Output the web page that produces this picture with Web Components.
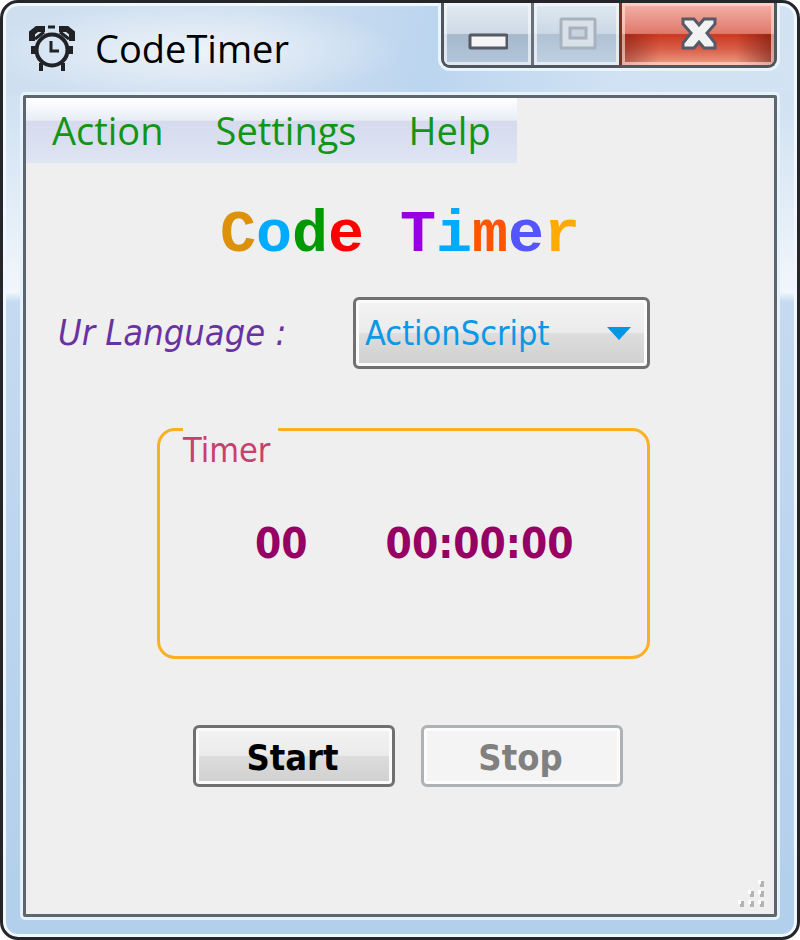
<!DOCTYPE html>
<html lang="en">
<head>
<meta charset="utf-8">
<meta name="viewport" content="width=device-width, initial-scale=1">
<title>CodeTimer</title>
<style>
	body {
		margin : 0;
		background : white;
		--ui : "Open Sans", "Noto Sans", sans-serif;
		--form : "DejaVu Sans Condensed", "DejaVu Sans", sans-serif;
	}
</style>
</head>
<body>

<app-window>
	<window-title slot="title">CodeTimer</window-title>
	<window-controls slot="controls"></window-controls>
	<menu-bar>
		<menu-entry>Action</menu-entry>
		<menu-entry>Settings</menu-entry>
		<menu-entry>Help</menu-entry>
	</menu-bar>
	<rainbow-title text="Code Timer"></rainbow-title>
	<language-picker label="Ur Language :" value="ActionScript"></language-picker>
	<timer-box label="Timer"></timer-box>
	<timer-actions></timer-actions>
	<size-grip></size-grip>
</app-window>

<script>
'use strict';

// shared by every component : build the open shadow root
function render(host, style, html) {
	host.attachShadow({mode: 'open'}).innerHTML = `<style>*{box-sizing:border-box}${style}</style>${html}`;
}

customElements.define('app-window', class extends HTMLElement {
	constructor() {
		super();
		render(this, `
			:host {
				display : flex;
				flex-direction : column;
				box-sizing : border-box;
				min-height : 100vh;
				padding : 0 20px 20px;
				border : 3px solid #25262a;
				border-radius : 18px;
				box-shadow : inset 0 0 0 3px #f0f8fd;
				background :
					radial-gradient(ellipse 210px 50px at 190px 48px, #edf3f9 0%, #edf3f900 100%),
					linear-gradient(100deg, #cfdff0 0, #cfdff0 32%, #bcd5ef 54%, #cfe1f3 76%, #d3e3f4 100%) top / 100% 92px no-repeat,
					linear-gradient(#d0e1f2 0, #d0e1f2 10%, #f1f6fb 31%, #c5daf0 32%, #bcd5ee 60%, #b2cfeb 100%);
			}
			header {
				display : flex;
				align-items : flex-start;
				justify-content : space-between;
				height : 92px;
			}
			main {
				flex : 1;
				display : flex;
				flex-direction : column;
				background : #efefef;
				border : 3px solid #5d666f;
				border-radius : 2px;
				box-shadow : 0 0 0 3px #e6f2fb;
			}`, `
			<header><slot name="title"></slot><slot name="controls"></slot></header>
			<main><slot></slot></main>`);
	}
});

customElements.define('window-title', class extends HTMLElement {
	constructor() {
		super();
		render(this, `
			:host {
				display : flex;
				align-items : center;
				gap : 20px;
				height : 90px;
				padding-left : 6px;
				font : 38px/48px var(--ui);
				color : black;
			}
			svg { flex : none; }`, `
			<svg width="46" height="46" viewBox="0 0 46 46" fill="none" stroke="#202226" stroke-width="4" aria-hidden="true">
				<circle cx="23" cy="25" r="15.5"/>
				<path d="M19 2h7" stroke-width="3"/>
				<path d="M3 16V8l5-4h8M43 16V8l-5-4h-8" stroke-width="6"/>
				<path d="M6 14l9-7M40 14l-9-7" stroke-width="3"/>
				<path d="M22 16v10h8" stroke-width="3"/>
				<path d="M12 38v8M34 38v8M4 21v8M42 21v8" stroke-width="4"/>
			</svg>
			<slot></slot>`);
	}
});

customElements.define('window-controls', class extends HTMLElement {
	constructor() {
		super();
		render(this, `
			:host {
				display : flex;
				height : 62px;
				border : 3px solid #50565e;
				border-top : none;
				border-radius : 0 0 9px 9px;
				box-shadow : 0 0 0 3px #e9f4fc;
				overflow : hidden;
				clip-path : inset(0 -3px -3px -3px);
			}
			button {
				display : grid;
				place-items : center;
				width : 90px;
				margin : 0;
				padding : 0;
				border : none;
				border-right : 3px solid #68717b;
				background : linear-gradient(#e3ebf3 0, #cfdae6 49%, #a6b8cb 51%, #b4c6da 100%);
				box-shadow : inset 0 0 0 3px #f5f8fbb0;
			}
			.zoom {
				width : 88px;
				border-right-color : #7a2f27;
				background : linear-gradient(#e0e9f1 0, #cbd8e5 49%, #afc1d4 51%, #c0d1e3 100%);
			}
			.close {
				width : 152px;
				border-right : none;
				background :
					linear-gradient(90deg, #60100a70 0, #60100a00 25%, #60100a00 75%, #60100a90 100%) bottom / 100% 50% no-repeat,
					linear-gradient(#f4b3aa 0, #df796b 49%, #cc3820 51%, #d9604a 75%, #ef9f87 100%);
				box-shadow : inset 0 0 0 3px #ffe0d8a0;
			}`, `
			<button type="button" aria-label="Minimize">
				<svg width="40" height="34" viewBox="0 0 40 34">
					<rect x="2" y="18" width="37" height="13" rx="1" fill="#f5f5f5" stroke="#555866" stroke-width="3"/>
				</svg>
			</button>
			<button type="button" class="zoom" aria-label="Maximize" disabled>
				<svg width="40" height="34" viewBox="0 0 40 34" stroke="#a8b2be" stroke-width="3">
					<rect x="4" y="2" width="34" height="29" rx="1" fill="#d9e0e8"/>
					<rect x="13" y="11" width="16" height="10" fill="#c9d3de"/>
				</svg>
			</button>
			<button type="button" class="close" aria-label="Close">
				<svg width="38" height="34" viewBox="0 0 38 34">
					<path d="M4 2h11l5 6 5-6h11v5l-8 9 8 10v5H25l-5-6-5 6H4v-5l8-10-8-9z" fill="#f2f2f2" stroke="#555a66" stroke-width="3"/>
				</svg>
			</button>`);
	}
});

customElements.define('menu-bar', class extends HTMLElement {
	constructor() {
		super();
		render(this, `
			:host {
				display : flex;
				align-self : flex-start;
				background : linear-gradient(#ffffff 0, #e9edf7 34%, #d5daed 36%, #e0e5f4 100%);
			}`, `<slot></slot>`);
		this.setAttribute('role', 'menubar');
	}
});

customElements.define('menu-entry', class extends HTMLElement {
	constructor() {
		super();
		render(this, `
			:host { display : block; }
			button {
				display : block;
				margin : 0;
				padding : 0 26px;
				border : none;
				background : none;
				font : 38px/65px var(--ui);
				color : #119614;
			}`, `<button type="button" role="menuitem"><slot></slot></button>`);
	}
});

customElements.define('rainbow-title', class extends HTMLElement {
	constructor() {
		super();
		const colors = ['#dc9109', '#00aaff', '#009900', '#ff0000', '', '#9600e0', '#00aaff', '#ff5500', '#5555ff', '#ffaa00'];
		const letters = Array.from(this.getAttribute('text'), (letter, i) =>
			letter === ' ' ? ' ' : `<span style="color:${colors[i]}">${letter}</span>`).join('');
		render(this, `
			:host { display : block; }
			h1 {
				margin : 38px 0 0;
				font : bold 60px/68px "Liberation Mono", monospace;
				text-align : center;
			}`, `<h1>${letters}</h1>`);
	}
});

customElements.define('language-picker', class extends HTMLElement {
	constructor() {
		super();
		render(this, `
			:host {
				display : flex;
				align-items : center;
				justify-content : space-between;
				margin : 28px 124px 0 32px;
				font : 34px/44px var(--form);
			}
			label {
				font-size : 36px;
				font-style : italic;
				color : #6a32a0;
				white-space : nowrap;
			}
			.combo {
				display : grid;
				align-items : center;
				width : 297px;
			}
			select, svg { grid-area : 1 / 1; }
			select {
				appearance : none;
				height : 72px;
				margin : 0;
				padding : 0 9px;
				border : 3px solid #707070;
				border-radius : 6px;
				background : linear-gradient(#f3f3f3 0, #ebebeb 49%, #dddddd 51%, #cfcfcf 100%);
				box-shadow : inset 0 0 0 3px #fbfbfb;
				font : inherit;
				color : #0c98e6;
			}
			svg {
				justify-self : end;
				margin-right : 18px;
				pointer-events : none;
			}`, `
			<label for="language"></label>
			<span class="combo">
				<select id="language"><option></option></select>
				<svg width="26" height="14" viewBox="0 0 26 14" aria-hidden="true"><path d="M1 1h24L13 14z" fill="#0096e6"/></svg>
			</span>`);
		this.shadowRoot.querySelector('label').textContent = this.getAttribute('label');
		this.shadowRoot.querySelector('option').textContent = this.getAttribute('value');
	}
});

customElements.define('timer-box', class extends HTMLElement {
	constructor() {
		super();
		// the legend is only as high as the border, so its text hangs under the line
		render(this, `
			:host {
				display : block;
				margin : 59px 124px 0 131px;
				font-family : var(--form);
			}
			fieldset {
				margin : 0;
				padding : 82px 23px 82px;
				border : 3px solid #fbb024;
				border-radius : 18px;
			}
			legend {
				height : 3px;
				padding : 0 8px 0 0;
				font-size : 34px;
				line-height : 44px;
				color : #c8406e;
			}
			.values {
				display : flex;
				gap : 78px;
				padding-left : 72px;
				font-size : 42px;
				line-height : 61px;
				font-weight : bold;
				color : #960064;
			}`, `
			<fieldset>
				<legend></legend>
				<div class="values">
					<output aria-label="Days">00</output>
					<output aria-label="Time">00:00:00</output>
				</div>
			</fieldset>`);
		this.shadowRoot.querySelector('legend').textContent = this.getAttribute('label');
	}
});

customElements.define('timer-actions', class extends HTMLElement {
	constructor() {
		super();
		render(this, `
			:host {
				display : flex;
				justify-content : center;
				gap : 26px;
				margin : 66px 124px 0 140px;
			}
			button {
				width : 202px;
				height : 62px;
				margin : 0;
				padding : 3px 3px 0 0;
				border : 3px solid #707070;
				border-radius : 6px;
				background : linear-gradient(#f3f3f3 0, #ebebeb 49%, #dddddd 51%, #cfcfcf 100%);
				box-shadow : inset 0 0 0 3px #fbfbfb;
				font : bold 36px/44px var(--form);
				color : black;
			}
			button:disabled {
				border-color : #adb2b5;
				background : #f4f4f4;
				color : #808080;
			}`, `
			<button type="button">Start</button>
			<button type="button" disabled>Stop</button>`);
	}
});

customElements.define('size-grip', class extends HTMLElement {
	constructor() {
		super();
		const dots = [[26, 6], [16, 16], [26, 16], [6, 26], [16, 26], [26, 26]].
			map(([x, y]) => `<path d="M${x - 2} ${y}h4v4h-4z" fill="#fff"/><path d="M${x + 1} ${y + 1}h3v6h-4v-3h1z" fill="#b4b4b4"/>`).join('');
		render(this, `
			:host {
				display : flex;
				justify-content : flex-end;
				margin-top : auto;
			}`, `<svg width="40" height="40" viewBox="0 0 40 40" aria-hidden="true">${dots}</svg>`);
	}
});
</script>
</body>
</html>
